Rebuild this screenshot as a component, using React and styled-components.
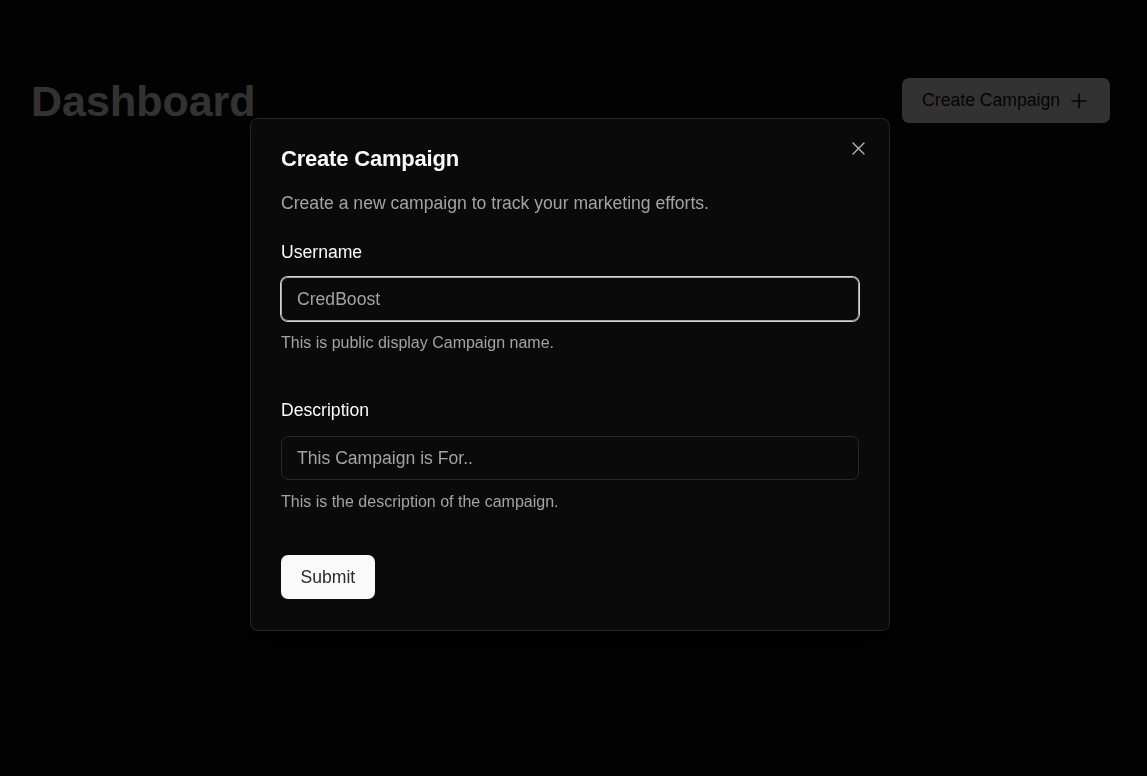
import React from "react";
import styled, { createGlobalStyle } from "styled-components";

const GlobalStyle = createGlobalStyle`
  html, body {
    margin: 0;
    padding: 0;
    background: #0a0a0a;
    font-family: "Liberation Sans", Arial, sans-serif;
  }
  * { box-sizing: border-box; }
`;

const Page = styled.div`
  min-height: 776px;
  background: #0a0a0a;
`;

const Header = styled.header`
  display: flex;
  align-items: flex-start;
  justify-content: space-between;
  padding: 78px 37px 0 31px;
`;

const PageTitle = styled.h1`
  margin: 2px 0 0;
  font-size: 43px;
  line-height: 1;
  font-weight: 700;
  color: #fafafa;
`;

const PrimaryButton = styled.button`
  display: inline-flex;
  align-items: center;
  gap: 7px;
  height: 45px;
  padding: 0 19px 0 20px;
  border: none;
  border-radius: 7px;
  background: #fafafa;
  color: #171717;
  font-family: inherit;
  font-size: 17.6px;
  cursor: pointer;
`;

const Overlay = styled.div`
  position: fixed;
  inset: 0;
  background: rgba(0, 0, 0, 0.8);
`;

const Dialog = styled.div`
  position: fixed;
  left: 250px;
  top: 118px;
  width: 640px;
  padding: 27px 30px 31px;
  background: #0a0a0a;
  border: 1px solid #262626;
  border-radius: 8px;
  box-shadow: 0 10px 15px -3px rgba(0, 0, 0, 0.1);
  display: flex;
  flex-direction: column;
`;

const CloseButton = styled.button`
  position: absolute;
  top: 21px;
  right: 22px;
  width: 17px;
  height: 17px;
  padding: 0;
  border: none;
  background: transparent;
  color: #b5b5b5;
  display: flex;
  align-items: center;
  justify-content: center;
  cursor: pointer;
`;

const DialogHeader = styled.div`
  display: flex;
  flex-direction: column;
  gap: 18px;
`;

const DialogTitle = styled.h2`
  margin: 0;
  font-size: 22px;
  line-height: 26.4px;
  font-weight: 700;
  letter-spacing: -0.2px;
  color: #fafafa;
`;

const DialogDescription = styled.p`
  margin: 0;
  font-size: 17.6px;
  line-height: 26.4px;
  color: #a3a3a3;
`;

const Form = styled.form`
  display: flex;
  flex-direction: column;
  gap: 47px;
  margin-top: 27px;
`;

const Field = styled.div`
  display: flex;
  flex-direction: column;
`;

const Label = styled.label`
  font-size: 17.6px;
  line-height: 17.6px;
  font-weight: 500;
  color: #fafafa;
`;

const Input = styled.input`
  margin-top: 16px;
  height: 44px;
  width: 100%;
  padding: 0 15px;
  background: transparent;
  border: 1px solid ${(p) => (p.$focused ? "#a3a3a3" : "#262626")};
  box-shadow: ${(p) => (p.$focused ? "0 0 0 1px #d4d4d4" : "none")};
  border-radius: 7px;
  font-family: inherit;
  font-size: 17.6px;
  color: #fafafa;
  outline: none;
  caret-color: #fafafa;
  &::placeholder {
    color: #a3a3a3;
  }
`;

const Helper = styled.p`
  margin: 10px 0 0;
  font-size: 16px;
  line-height: 24px;
  color: #a3a3a3;
`;

const SubmitButton = styled.button`
  align-self: flex-start;
  height: 44px;
  padding: 0 19.5px;
  margin-top: -6px;
  border: none;
  border-radius: 7px;
  background: #fafafa;
  color: #2a2a2a;
  font-family: inherit;
  font-size: 17.6px;
  cursor: pointer;
`;

const PlusIcon = () => (
  <svg width="24" height="24" viewBox="0 0 24 24" fill="none" stroke="currentColor" strokeWidth="1.6" strokeLinecap="round">
    <path d="M5 12h14M12 5v14" />
  </svg>
);

const XIcon = () => (
  <svg width="13" height="13" viewBox="0 0 13 13" fill="none" stroke="currentColor" strokeWidth="1.4" strokeLinecap="round">
    <path d="M1 1l11 11M12 1L1 12" />
  </svg>
);

export default function App() {
  return (
    <>
      <GlobalStyle />
      <Page>
        <Header>
          <PageTitle>Dashboard</PageTitle>
          <PrimaryButton type="button">
            Create Campaign
            <PlusIcon />
          </PrimaryButton>
        </Header>
      </Page>
      <Overlay />
      <Dialog role="dialog" aria-labelledby="dlg-title">
        <CloseButton type="button" aria-label="Close">
          <XIcon />
        </CloseButton>
        <DialogHeader>
          <DialogTitle id="dlg-title">Create Campaign</DialogTitle>
          <DialogDescription>Create a new campaign to track your marketing efforts.</DialogDescription>
        </DialogHeader>
        <Form onSubmit={(e) => e.preventDefault()}>
          <Field>
            <Label htmlFor="username">Username</Label>
            <Input id="username" $focused autoFocus placeholder="CredBoost" />
            <Helper>This is public display Campaign name.</Helper>
          </Field>
          <Field>
            <Label htmlFor="description">Description</Label>
            <Input id="description" placeholder="This Campaign is For.." />
            <Helper>This is the description of the campaign.</Helper>
          </Field>
          <SubmitButton type="submit">Submit</SubmitButton>
        </Form>
      </Dialog>
    </>
  );
}
